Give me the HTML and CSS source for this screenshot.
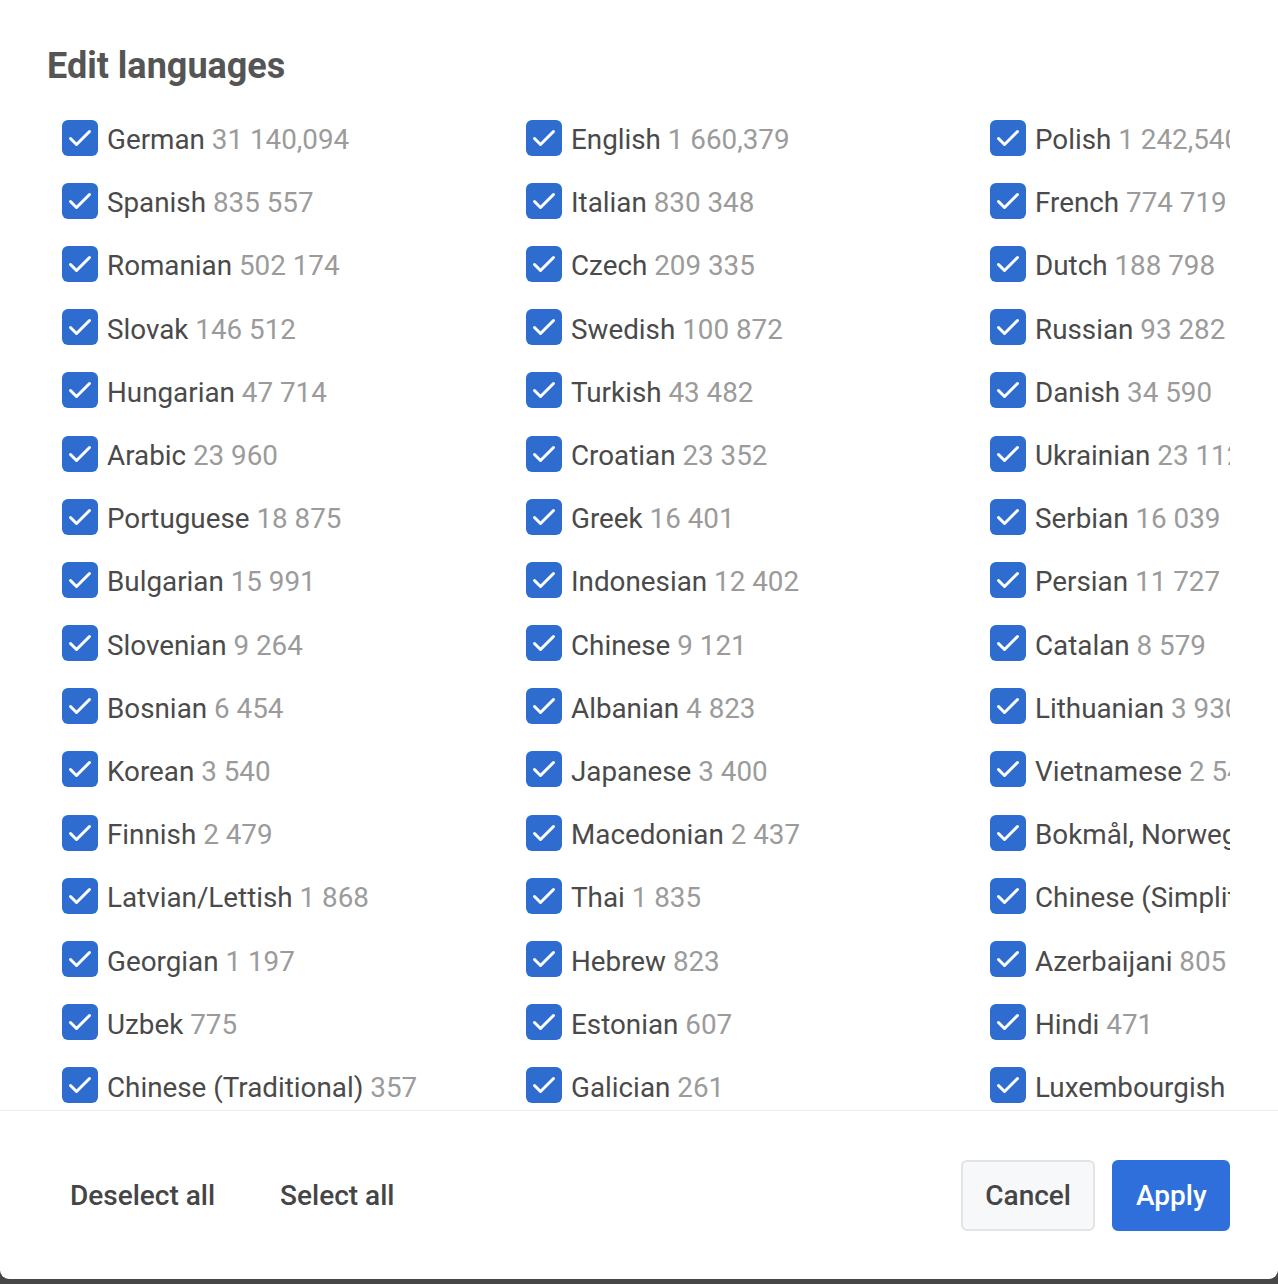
FILE: index.html
```html
<!DOCTYPE html>
<html lang="en">
<head>
<meta charset="utf-8">
<title>Edit languages</title>
<link rel="stylesheet" href="styles.css">
</head>
<body>
<div class="dialog">
  <h1 class="title">Edit languages</h1>
  <div class="list-wrap">
    <ul class="list" id="list"></ul>
  </div>
  <div class="footer">
    <div class="footer-left">
      <button class="btn-text">Deselect all</button>
      <button class="btn-text">Select all</button>
    </div>
    <div class="footer-right">
      <button class="btn btn-cancel">Cancel</button>
      <button class="btn btn-apply">Apply</button>
    </div>
  </div>
</div>
<script src="app.js"></script>
</body>
</html>
```

FILE: app.js
```js
var data = [
  ["German","31 140,094"],["English","1 660,379"],["Polish","1 242,540"],
  ["Spanish","835 557"],["Italian","830 348"],["French","774 719"],
  ["Romanian","502 174"],["Czech","209 335"],["Dutch","188 798"],
  ["Slovak","146 512"],["Swedish","100 872"],["Russian","93 282"],
  ["Hungarian","47 714"],["Turkish","43 482"],["Danish","34 590"],
  ["Arabic","23 960"],["Croatian","23 352"],["Ukrainian","23 112"],
  ["Portuguese","18 875"],["Greek","16 401"],["Serbian","16 039"],
  ["Bulgarian","15 991"],["Indonesian","12 402"],["Persian","11 727"],
  ["Slovenian","9 264"],["Chinese","9 121"],["Catalan","8 579"],
  ["Bosnian","6 454"],["Albanian","4 823"],["Lithuanian","3 930"],
  ["Korean","3 540"],["Japanese","3 400"],["Vietnamese","2 541"],
  ["Finnish","2 479"],["Macedonian","2 437"],["Bokmål, Norwegian; Norwegian Bokmål","2 106"],
  ["Latvian/Lettish","1 868"],["Thai","1 835"],["Chinese (Simplified)","1 520"],
  ["Georgian","1 197"],["Hebrew","823"],["Azerbaijani","805"],
  ["Uzbek","775"],["Estonian","607"],["Hindi","471"],
  ["Chinese (Traditional)","357"],["Galician","261"],["Luxembourgish","253"]
];
var check = '<svg class="cb" viewBox="0 0 36 36" width="36" height="36" aria-hidden="true"><rect x="0" y="0" width="36" height="36" rx="6" fill="#2f6ccf"/><path d="M8.5 18.5 L14.5 24.5 L27.5 11.5" fill="none" stroke="#fff" stroke-width="3" stroke-linecap="round" stroke-linejoin="round"/></svg>';
var list = document.getElementById("list");
var html = "";
data.forEach(function (d) {
  html += '<li class="item">' + check + '<span class="label"><span class="name">' + d[0] + '</span> <span class="count">' + d[1] + '</span></span></li>';
});
list.innerHTML = html;
```

FILE: styles.css
```css
* { box-sizing: border-box; }
html, body { margin: 0; padding: 0; }
body {
  background: #474747;
  font-family: Roboto, "Liberation Sans", Arial, sans-serif;
  height: 1284px;
  overflow: hidden;
}
.dialog {
  background: #fff;
  height: 1279px;
  border-radius: 0 0 9px 9px;
  display: flex;
  flex-direction: column;
}
.title {
  margin: 0;
  padding: 46px 47px 20px;
  font-size: 36px;
  line-height: 40px;
  font-weight: 700;
  color: #555555;
}
.list-wrap {
  flex: 1;
  overflow: hidden;
  margin: 0 48px 0 47px;
}
.list {
  list-style: none;
  margin: 0;
  padding: 0 0 0 15px;
  display: grid;
  grid-template-columns: repeat(3, 464px);
  grid-auto-rows: 63.2px;
}
.item {
  display: flex;
  align-items: center;
  white-space: nowrap;
  overflow: hidden;
  font-size: 27.8px;
  color: #4a4a4a;
}
.cb { flex: none; margin-right: 9px; }
.label { margin-top: 4px; }
.name { color: #4a4a4a; }
.count { color: #9b9b9b; }
.footer {
  height: 169px;
  border-top: 1px solid #ececec;
  display: flex;
  align-items: center;
  justify-content: space-between;
  padding: 0 48px 0 47px;
}
.footer-left { display: flex; align-items: center; gap: 19px; }
.footer-right { display: flex; align-items: center; gap: 17px; }
button {
  font-family: inherit;
  font-size: 28px;
  font-weight: 500;
  cursor: pointer;
}
.btn-text {
  background: none;
  border: none;
  color: #454545;
  padding: 0 23px;
  height: 71px;
}
.btn {
  height: 71px;
  border-radius: 6px;
  padding: 0 22px;
}
.btn-cancel {
  background: #f7f8fa;
  border: 2px solid #e1e3e6;
  color: #454545;
  margin-left: 1px;
}
.btn-apply {
  background: #2f6fdc;
  border: 2px solid #2f6fdc;
  color: #fff;
  width: 118px;
}
```
